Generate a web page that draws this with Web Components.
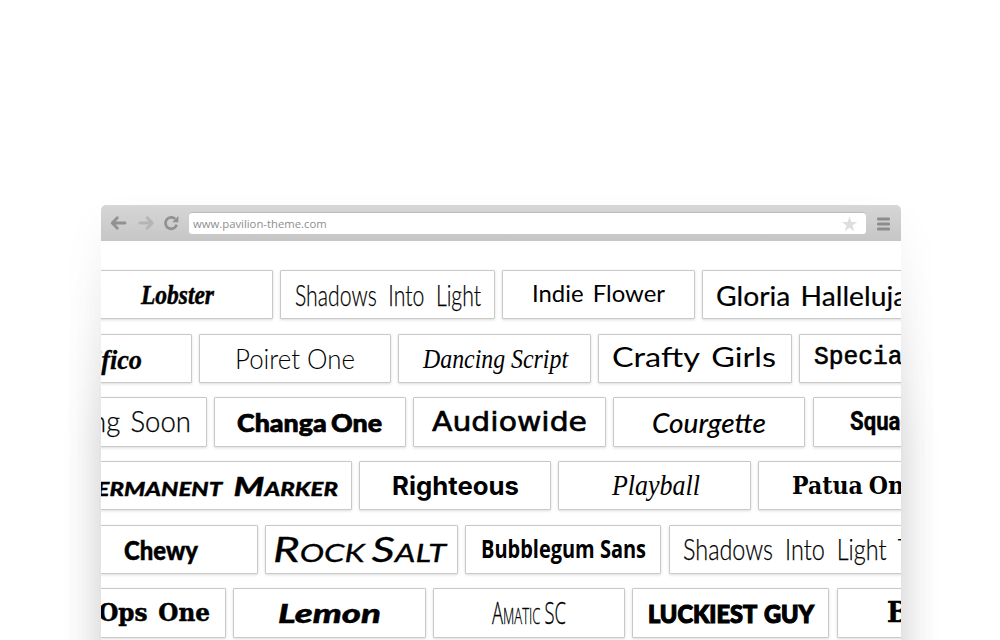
<!DOCTYPE html>
<html lang="en">
<head>
<meta charset="utf-8">
<title>Pavilion fonts</title>
<style>
html,body{margin:0;height:100%;overflow:hidden;background:#fff;font-family:"Open Sans",sans-serif}
</style>
</head>
<body>
<browser-window url="www.pavilion-theme.com"><font-wall></font-wall></browser-window>
<script>
class BrowserWindow extends HTMLElement {
  constructor() {
    super();
    this.attachShadow({mode: "open"}).innerHTML = `
    <style>
      :host{display:block;height:640px;overflow:hidden;padding:205px 99px 0 101px;box-sizing:border-box}
      .frame{height:760px;border-radius:5px 5px 0 0;background:#fff;
        box-shadow:0 20px 45px rgba(0,0,0,.05),0 75px 45px rgba(0,0,0,.055),0 135px 45px rgba(0,0,0,.06),0 200px 50px rgba(0,0,0,.07)}
      header{height:36px;box-sizing:border-box;border-radius:5px 5px 0 0;
        background:linear-gradient(#d6d6d6,#c6c6c6);display:flex;align-items:center;padding:1px 10px 0 8px}
      svg{display:block;flex:none}
      .arrow{margin-bottom:1px}
      .fwd{margin-left:10px}.reload{margin:0 0 1px 8px}
      .url{flex:1;height:21px;margin:0 10px 0 10px;background:#fff;border-radius:3px;display:flex;align-items:center;
        justify-content:space-between;padding:0 8px 0 4px;box-shadow:0 -1px 0 #bcbcbc;font-size:11.3px;color:#8e8e8e}
      .url span{padding-bottom:1px}
      main{height:524px;overflow:hidden}
    </style>
    <div class="frame">
      <header>
        <svg class="arrow" width="18" height="18" viewBox="0 0 18 18" fill="none" stroke="#919191" stroke-width="2.8" stroke-linecap="round" stroke-linejoin="round"><path d="M8.300 3.700 3.200 9l5.100 5.300M3.500 9H16"/></svg>
        <svg class="arrow fwd" width="18" height="18" viewBox="0 0 18 18" fill="none" stroke="#b5b5b5" stroke-width="2.800" stroke-linecap="round" stroke-linejoin="round"><path d="M10.200 3.700 15.300 9l-5.100 5.300M15 9H2.800"/></svg>
        <svg class="reload" width="16" height="18" viewBox="0 0 16 18"><path d="M12.200 5A5.700 5.700 0 1 0 13.700 10.700" fill="none" stroke="#919191" stroke-width="2.700"/><path d="M15.400 2v6.200H9.200z" fill="#919191"/></svg>
        <div class="url"><span></span>
          <svg width="17" height="16" viewBox="0 0 17 16"><path d="M8.500.5 10.400 6h5.800l-4.700 3.500 1.800 5.700-4.800-3.500-4.800 3.500 1.800-5.700L.8 6h5.800z" fill="#dedede"/></svg>
        </div>
        <svg width="15" height="16" viewBox="0 0 15 16"><g fill="#8d8d8d"><rect x="1" y="1.500" width="13" height="3" rx="1.200"/><rect x="1" y="6.500" width="13" height="3" rx="1.200"/><rect x="1" y="11.500" width="13" height="3" rx="1.200"/></g></svg>
      </header>
      <main><slot></slot></main>
    </div>`;
  }
  connectedCallback() { this.shadowRoot.querySelector(".url span").textContent = this.getAttribute("url"); }
}

/* One tile with a font's name; the name is stretched to its own lettering width. */
class FontCard extends HTMLElement {
  constructor() {
    super();
    this.attachShadow({mode: "open"}).innerHTML = `
    <style>
      :host{display:block;flex:none;box-sizing:border-box;border:1px solid #c9c9c9;border-radius:1px;background:#fff;
        box-shadow:0 1px 3px rgba(0,0,0,.14);height:49.4px;color:#000}
      .name{display:block;width:max-content;white-space:pre;transform-origin:0 50%}
    </style><span class="name"><slot></slot></span>`;
  }
  fit(o) {
    this.style.width = o.w + "px";
    const n = this.shadowRoot.querySelector(".name");
    n.style.font = o.font;
    n.style.lineHeight = "47.4px";
    n.style.marginLeft = (o.x - 1) + "px";
    n.style.wordSpacing = (o.gap || 0) + "px";
    if (o.stroke) n.style.webkitTextStroke = o.stroke + "px #000";
    const s = o.ink / n.getBoundingClientRect().width;
    n.style.transform = `translateY(${o.dy || 0}px) scaleX(${s})`;
  }
}

const SERIF = '"Liberation Serif",serif', LATO = 'Lato,sans-serif', OPEN = '"Open Sans",sans-serif',
      MONO = '"Liberation Mono",monospace', DJS = '"DejaVu Serif",serif', DJ = '"DejaVu Sans",sans-serif',
      ROB = 'Roboto,sans-serif', INTER = 'Inter,sans-serif';
/* each row: [name, left, right, lettering left, lettering right, font, dy, word gap, stroke] in window coordinates */
const ROWS = [
 [["Lobster",81,273,141,214,`italic 700 27px ${SERIF}`,1,0,.5],
  ["Shadows Into Light",280,495,295,481,`300 29px ${LATO}`,0,8,.25],
  ["Indie Flower",502,695,532,665,`400 23px ${LATO}`,-1,3],
  ["Gloria Hallelujah",702,942,716,923,`400 27px ${LATO}`,1,3,.2]],
 [["Pacifico",0,192,53,142,`italic 700 27px ${SERIF}`,2,0,.3],
  ["Poiret One",199,391,235,355,`300 27px ${LATO}`,0,0],
  ["Dancing Script",398,591,423,568,`italic 400 28px ${SERIF}`,0],
  ["Crafty Girls",598,792,612,776,`400 26px ${LATO}`,-1,3],
  ["Special Elite",799,1020,814,1006,`400 26px ${MONO}`,-1,0,.6]],
 [["Coming Soon",14,207,29,191,`300 29px ${LATO}`,-1,3,.25],
  ["Changa One",214,406,237,382,`900 25px ${LATO}`,1,-2,.7],
  ["Audiowide",413,606,432,587,`500 26px ${DJ}`,1,0,.6],
  ["Courgette",613,805,652,766,`italic 500 27px ${LATO}`,1],
  ["Squada One",813,1005,850,970,`700 26px ${ROB}`,0,0,.4]],
 [["Permanent Marker",60,352,76,338,`italic small-caps 900 26px ${LATO}`,1,3,.3],
  ["Righteous",359,551,392,519,`700 25.5px ${INTER}`,0],
  ["Playball",558,751,612,700,`italic 400 29px ${SERIF}`,0],
  ["Patua One",758,951,792,918,`700 25px ${DJS}`,0,-2]],
 [["Chewy",65,258,124,198,`900 27px ${LATO}`,0,0,.5],
  ["Rock Salt",265,458,273,446,`italic small-caps 400 35px ${LATO}`,-1,-3,.3],
  ["Bubblegum Sans",465,661,481,646,`700 25px ${OPEN}`,-1],
  ["Shadows Into Light Two",669,950,683,940,`300 29px ${LATO}`,-1,7,.25]],
 [["Black Ops One",0,226,14,210,`700 25px ${DJS}`,0,3,.5],
  ["Lemon",233,426,278,381,`italic 900 26px ${LATO}`,1,0,.4],
  ["Amatic SC",433,625,492,566,`small-caps 300 31px ${OPEN}`,0,-1,.3],
  ["LUCKIEST GUY",632,829,648,814,`900 25px ${LATO}`,1,2,1.2],
  ["Bevan",837,1029,887,977,`700 27px ${DJS}`,0,0,.5]]
];

class FontWall extends HTMLElement {
  constructor() {
    super();
    this.attachShadow({mode: "open"}).innerHTML = `
    <style>
      :host{display:flex;flex-direction:column;gap:14.28px;padding-top:29px}
      .row{display:flex;height:49.4px}
    </style>`;
  }
  connectedCallback() {
    for (const cards of ROWS) {
      const row = document.createElement("div");
      row.className = "row";
      this.shadowRoot.append(row);
      let edge = 101;
      for (const [name, l, r, tl, tr, font, dy, gap, stroke] of cards) {
        const c = document.createElement("font-card");
        c.textContent = name;
        c.style.marginLeft = (l - edge) + "px";
        edge = r;
        row.append(c);
        c.fit({w: r - l, x: tl - l, ink: tr - tl, font, dy, gap, stroke});
      }
    }
  }
}
customElements.define("font-card", FontCard);
customElements.define("font-wall", FontWall);
customElements.define("browser-window", BrowserWindow);
</script>
</body>
</html>
